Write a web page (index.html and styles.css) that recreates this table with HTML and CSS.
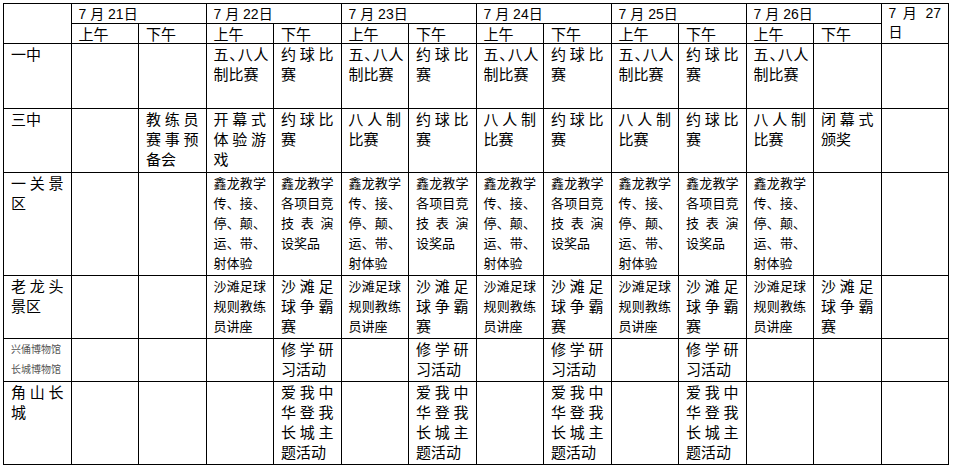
FILE: index.html
```html
<!DOCTYPE html>
<html lang="zh">
<head>
<meta charset="utf-8">
<link rel="stylesheet" href="styles.css">
</head>
<body>
<table class="sched">
<colgroup>
<col><col><col><col><col><col><col><col><col><col><col><col><col><col>
</colgroup>
<tr class="r-date">
<td class="blank" rowspan="2"></td>
<td class="date" colspan="2">7 月 21日</td>
<td class="date" colspan="2">7 月 22日</td>
<td class="date" colspan="2">7 月 23日</td>
<td class="date" colspan="2">7 月 24日</td>
<td class="date" colspan="2">7 月 25日</td>
<td class="date" colspan="2">7 月 26日</td>
<td class="date last" rowspan="2"><span class="l j">7 月 27</span><span class="l">日</span></td>
</tr>
<tr class="r-half">
<td class="half">上午</td><td class="half">下午</td>
<td class="half">上午</td><td class="half">下午</td>
<td class="half">上午</td><td class="half">下午</td>
<td class="half">上午</td><td class="half">下午</td>
<td class="half">上午</td><td class="half">下午</td>
<td class="half">上午</td><td class="half">下午</td>
</tr>
<tr class="r1">
<td>一中</td>
<td></td><td></td>
<td><span class="l nw">五<span class="pun">、</span>八人</span><span class="l">制比赛</span></td>
<td><span class="l j">约球比</span><span class="l">赛</span></td>
<td><span class="l nw">五<span class="pun">、</span>八人</span><span class="l">制比赛</span></td>
<td><span class="l j">约球比</span><span class="l">赛</span></td>
<td><span class="l nw">五<span class="pun">、</span>八人</span><span class="l">制比赛</span></td>
<td><span class="l j">约球比</span><span class="l">赛</span></td>
<td><span class="l nw">五<span class="pun">、</span>八人</span><span class="l">制比赛</span></td>
<td><span class="l j">约球比</span><span class="l">赛</span></td>
<td><span class="l nw">五<span class="pun">、</span>八人</span><span class="l">制比赛</span></td>
<td></td><td></td>
</tr>
<tr class="r2">
<td>三中</td>
<td></td>
<td><span class="l j">教练员</span><span class="l j">赛事预</span><span class="l">备会</span></td>
<td><span class="l j">开幕式</span><span class="l j">体验游</span><span class="l">戏</span></td>
<td><span class="l j">约球比</span><span class="l">赛</span></td>
<td><span class="l j">八人制</span><span class="l">比赛</span></td>
<td><span class="l j">约球比</span><span class="l">赛</span></td>
<td><span class="l j">八人制</span><span class="l">比赛</span></td>
<td><span class="l j">约球比</span><span class="l">赛</span></td>
<td><span class="l j">八人制</span><span class="l">比赛</span></td>
<td><span class="l j">约球比</span><span class="l">赛</span></td>
<td><span class="l j">八人制</span><span class="l">比赛</span></td>
<td><span class="l j">闭幕式</span><span class="l">颁奖</span></td>
<td></td>
</tr>
<tr class="r3">
<td><span class="l j">一关景</span><span class="l">区</span></td>
<td></td><td></td>
<td class="sm"><span class="l j">鑫龙教学</span><span class="l j">传、接、</span><span class="l j">停、颠、</span><span class="l j">运、带、</span><span class="l">射体验</span></td>
<td class="sm"><span class="l j">鑫龙教学</span><span class="l j">各项目竞</span><span class="l j">技表演</span><span class="l">设奖品</span></td>
<td class="sm"><span class="l j">鑫龙教学</span><span class="l j">传、接、</span><span class="l j">停、颠、</span><span class="l j">运、带、</span><span class="l">射体验</span></td>
<td class="sm"><span class="l j">鑫龙教学</span><span class="l j">各项目竞</span><span class="l j">技表演</span><span class="l">设奖品</span></td>
<td class="sm"><span class="l j">鑫龙教学</span><span class="l j">传、接、</span><span class="l j">停、颠、</span><span class="l j">运、带、</span><span class="l">射体验</span></td>
<td class="sm"><span class="l j">鑫龙教学</span><span class="l j">各项目竞</span><span class="l j">技表演</span><span class="l">设奖品</span></td>
<td class="sm"><span class="l j">鑫龙教学</span><span class="l j">传、接、</span><span class="l j">停、颠、</span><span class="l j">运、带、</span><span class="l">射体验</span></td>
<td class="sm"><span class="l j">鑫龙教学</span><span class="l j">各项目竞</span><span class="l j">技表演</span><span class="l">设奖品</span></td>
<td class="sm"><span class="l j">鑫龙教学</span><span class="l j">传、接、</span><span class="l j">停、颠、</span><span class="l j">运、带、</span><span class="l">射体验</span></td>
<td></td><td></td>
</tr>
<tr class="r4">
<td><span class="l j">老龙头</span><span class="l">景区</span></td>
<td></td><td></td>
<td class="sm"><span class="l j">沙滩足球</span><span class="l j">规则教练</span><span class="l">员讲座</span></td>
<td><span class="l j">沙滩足</span><span class="l j">球争霸</span><span class="l">赛</span></td>
<td class="sm"><span class="l j">沙滩足球</span><span class="l j">规则教练</span><span class="l">员讲座</span></td>
<td><span class="l j">沙滩足</span><span class="l j">球争霸</span><span class="l">赛</span></td>
<td class="sm"><span class="l j">沙滩足球</span><span class="l j">规则教练</span><span class="l">员讲座</span></td>
<td><span class="l j">沙滩足</span><span class="l j">球争霸</span><span class="l">赛</span></td>
<td class="sm"><span class="l j">沙滩足球</span><span class="l j">规则教练</span><span class="l">员讲座</span></td>
<td><span class="l j">沙滩足</span><span class="l j">球争霸</span><span class="l">赛</span></td>
<td class="sm"><span class="l j">沙滩足球</span><span class="l j">规则教练</span><span class="l">员讲座</span></td>
<td><span class="l j">沙滩足</span><span class="l j">球争霸</span><span class="l">赛</span></td>
<td></td>
</tr>
<tr class="r5">
<td class="tiny"><span class="l">兴俑博物馆</span><span class="l">长城博物馆</span></td>
<td></td><td></td><td></td>
<td><span class="l j">修学研</span><span class="l">习活动</span></td>
<td></td>
<td><span class="l j">修学研</span><span class="l">习活动</span></td>
<td></td>
<td><span class="l j">修学研</span><span class="l">习活动</span></td>
<td></td>
<td><span class="l j">修学研</span><span class="l">习活动</span></td>
<td></td><td></td><td></td>
</tr>
<tr class="r6">
<td><span class="l j">角山长</span><span class="l">城</span></td>
<td></td><td></td><td></td>
<td><span class="l j">爱我中</span><span class="l j">华登我</span><span class="l j">长城主</span><span class="l">题活动</span></td>
<td></td>
<td><span class="l j">爱我中</span><span class="l j">华登我</span><span class="l j">长城主</span><span class="l">题活动</span></td>
<td></td>
<td><span class="l j">爱我中</span><span class="l j">华登我</span><span class="l j">长城主</span><span class="l">题活动</span></td>
<td></td>
<td><span class="l j">爱我中</span><span class="l j">华登我</span><span class="l j">长城主</span><span class="l">题活动</span></td>
<td></td><td></td><td></td>
</tr>
</table>
</body>
</html>
```
FILE: styles.css
```css
html, body {
  margin: 0;
  padding: 0;
  background: #ffffff;
}
body {
  padding: 3px 0 0 3px;
  font-family: "Noto Sans CJK SC", "Noto Sans CJK JP", sans-serif;
  color: #000000;
}
.sched {
  border-collapse: collapse;
  table-layout: fixed;
  width: 946px;
}
.sched col {
  width: 67.5px;
}
.sched td {
  border: 1px solid #000000;
  padding: 0 7px;
  vertical-align: top;
  font-size: 15px;
  line-height: 20px;
  text-align: left;
  overflow: hidden;
}
.sched td.sm {
  font-size: 13px;
  line-height: 20px;
}
.sched td.tiny {
  font-size: 10px;
  line-height: 20px;
  color: #555555;
  white-space: nowrap;
  padding-right: 0;
}
.l {
  display: block;
}
.j {
  text-align: justify;
  text-align-last: justify;
  text-justify: inter-character;
}
.nw {
  white-space: nowrap;
  letter-spacing: 0.8px;
}
.pun {
  font-feature-settings: "halt";
}
.r-date td.date {
  font-family: "Liberation Sans", "Noto Sans CJK SC", sans-serif;
  font-size: 14px;
  line-height: 18px;
  vertical-align: middle;
}
.r-date td.last {
  vertical-align: top;
  font-size: 14px;
  line-height: 19px;
}
.r-date { height: 20px; }
.r-half { height: 20px; }
.r-half td.half {
  vertical-align: middle;
  line-height: 18px;
}
.r1 { height: 65px; }
.r2 { height: 64px; }
.r3 { height: 103px; }
.r4 { height: 63px; }
.r5 { height: 43px; }
.r6 { height: 83px; }
```
